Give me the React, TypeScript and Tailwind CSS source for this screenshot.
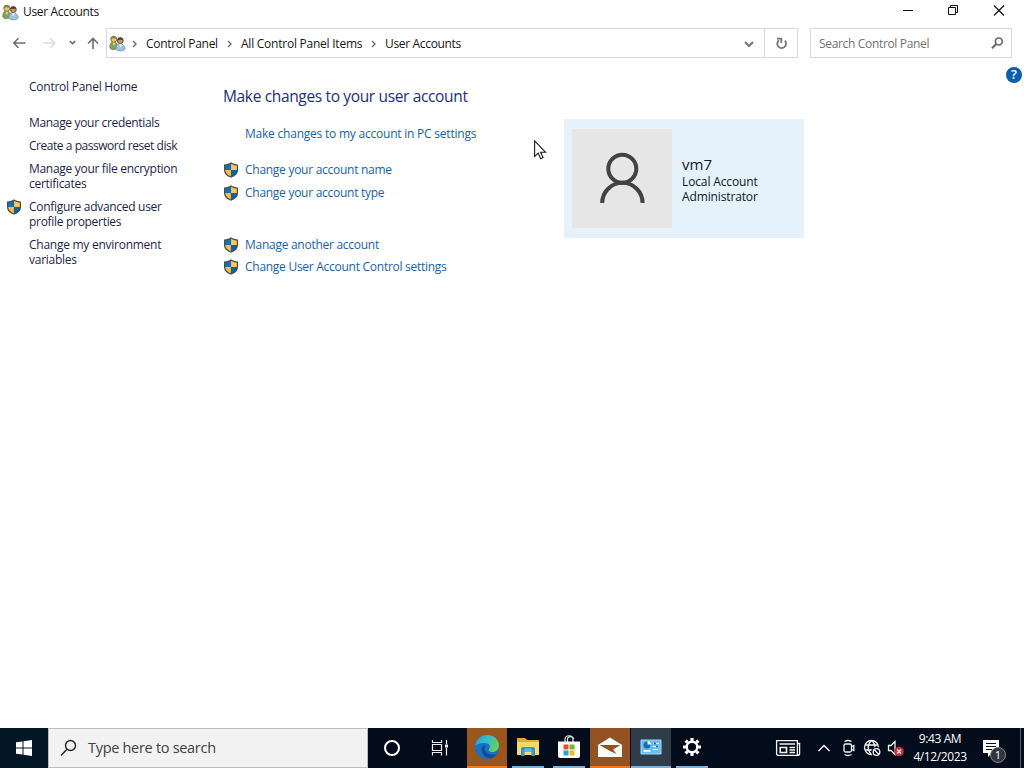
import type { ReactNode } from 'react';

function UsersIcon() {
  return (
    <svg width="17" height="17" viewBox="0 0 17 17" className="shrink-0">
      <path d="M.8 12.500c0-4 1.200-5.500 3.700-5.500s4 2 4 5l-2 2.500H2.200z" fill="#86a251" stroke="#5d7538" strokeWidth=".6" />
      <path d="M3.500 7.500l1.500 4 1-4z" fill="#dce8ae" />
      <circle cx="4.800" cy="4.300" r="3" fill="#dfc671" stroke="#7c672b" strokeWidth=".9" />
      <path d="M1.700 4.500c-.5-4.500 5.500-4.800 6-.7-2.200-1-4.500-.8-6 .7z" fill="#927837" />
      <path d="M6.800 14c0-3.500 1.700-5.200 4.200-5.200s5.200 2 5.200 5.200c-2 2.600-7.400 2.600-9.400 0z" fill="#9ec3dc" stroke="#638aa6" strokeWidth=".7" />
      <circle cx="11.300" cy="5.700" r="2.900" fill="#cb9564" stroke="#56412f" strokeWidth=".8" />
      <path d="M8.200 6c-.6-4.600 5.800-5 6.400-.6-2.200-.9-4.400-.9-6.400.6z" fill="#4d443b" />
      <path d="M9.800 9.200l1.700 3.300L13 9.200z" fill="#f4f6f5" />
    </svg>
  );
}

function Shield() {
  return (
    <svg width="16" height="16" viewBox="0 0 16 16" className="shrink-0">
      <path d="M8 .3c2 1.500 4 2 7 2.200V8c0 3.800-2.700 6.200-7 7.700C3.700 14.200 1 11.800 1 8V2.500C4 2.300 6 1.800 8 .3z" fill="#4b4c47" />
      <path d="M7.900 1.700C6.200 3 4.300 3.400 2.200 3.600V8h5.700z" fill="#1670b5" />
      <path d="M8.100 1.700C9.800 3 11.700 3.400 13.800 3.600V8H8.100z" fill="#fac85a" />
      <path d="M2.200 8h5.700v6.400C4.400 13.100 2.300 11.100 2.200 8z" fill="#f5bd4b" />
      <path d="M13.800 8H8.100v6.400c3.500-1.300 5.600-3.300 5.700-6.400z" fill="#0d61a8" />
    </svg>
  );
}

function Crumb({ children }: { children: ReactNode }) {
  return (
    <>
      <svg width="6" height="8" viewBox="0 0 6 8" className="shrink-0">
        <path d="M1 1l3 3-3 3" fill="none" stroke="#6b6b6b" strokeWidth="1.400" />
      </svg>
      {children}
    </>
  );
}

function TitleBar() {
  return (
    <header className="flex h-7 items-start justify-between">
      <div className="flex h-6 items-center gap-1 pl-0.5">
        <UsersIcon />
        <span className="text-xs tracking-[-0.33px]">User Accounts</span>
      </div>
      <svg width="124" height="22" viewBox="0 0 124 22" fill="none" stroke="#111" strokeWidth="1">
        <path d="M3 10.500h10" />
        <path d="M48.500 7.500h7v7h-7zM50.500 7.500v-2h7v7h-2" />
        <path d="M94 5.500l10 10M104 5.500l-10 10" strokeWidth="1.200" />
      </svg>
    </header>
  );
}

function AddressRow() {
  return (
    <div className="flex h-[30px] items-stretch pr-3">
      <svg width="106" height="30" viewBox="0 0 106 30" fill="none" stroke="#6d6d6d" strokeWidth="1.600" className="shrink-0">
        <path d="M25.500 15H14M18.500 10.300L13.800 15l4.700 4.700" />
        <path d="M43 15h11.500M50 10.300l4.700 4.700-4.700 4.700" stroke="#dadada" />
        <path d="M69.800 13.200l2.700 2.500 2.700-2.500" />
        <path d="M93 21V10.500M88 15.500l5-5 5 5" />
      </svg>
      <div className="flex w-[692px] border border-[#d9d9d9]">
        <div className="flex flex-1 items-center pt-px pl-0.5 text-xs">
          <UsersIcon />
          <div className="flex items-center pl-1.5">
            <Crumb>
              <span className="w-[89px] pl-2 tracking-[-0.3px]">Control Panel</span>
            </Crumb>
          </div>
          <Crumb>
            <span className="w-[138px] pl-2 tracking-[-0.24px]">All Control Panel Items</span>
          </Crumb>
          <Crumb>
            <span className="pl-2 tracking-[-0.33px]">User Accounts</span>
          </Crumb>
          <svg width="12" height="8" viewBox="0 0 12 8" className="mr-[9px] ml-auto">
            <path d="M2 2l4 4 4-4" fill="none" stroke="#747474" strokeWidth="2" />
          </svg>
        </div>
        <div className="flex w-[33px] items-center justify-center border-l border-[#d9d9d9]">
          <svg width="14" height="14" viewBox="0 0 14 14" fill="none" stroke="#747474" strokeWidth="1.800">
            <path d="M10.800 4.600A4.400 4.400 0 1 1 5 4.200" />
            <path d="M3 2.700h4.300V7" />
          </svg>
        </div>
      </div>
      <div className="ml-3 flex w-[202px] items-center justify-between border border-[#d9d9d9] pr-[7px] pl-2">
        <span className="pt-px text-xs tracking-[-0.33px] text-[#727272]">Search Control Panel</span>
        <svg width="14" height="14" viewBox="0 0 14 14" fill="none" stroke="#696969">
          <circle cx="8.800" cy="5.400" r="3.400" strokeWidth="1.700" />
          <path d="M6.300 8L2 12.300" strokeWidth="2" />
        </svg>
      </div>
    </div>
  );
}

function Sidebar() {
  return (
    <nav className="flex w-[223px] flex-col gap-2 pt-[21px] pl-[29px] text-xs leading-[15px] tracking-[-0.3px] text-[#1e1f4b]">
      <a className="mb-[13px] tracking-[-0.25px]">Control Panel Home</a>
      <a className="tracking-[-0.33px]">Manage your credentials</a>
      <a className="tracking-[-0.46px]">Create a password reset disk</a>
      <a>
        Manage your file encryption
        <br />
        certificates
      </a>
      <div className="-ml-[23px] flex gap-[7px]">
        <Shield />
        <a>
          Configure advanced user
          <br />
          profile properties
        </a>
      </div>
      <a className="tracking-[-0.26px]">
        Change my environment
        <br />
        variables
      </a>
    </nav>
  );
}

function TaskLink({ children }: { children: ReactNode }) {
  return (
    <div className="flex h-4 items-center gap-1.5">
      <Shield />
      <a>{children}</a>
    </div>
  );
}

function Tasks() {
  return (
    <section className="w-[341px] pt-7 text-xs leading-4 tracking-[-0.27px] text-[#1763ac]">
      <h1 className="text-[15.5px] leading-5 tracking-[-0.35px] text-[#1c2f80]">Make changes to your user account</h1>
      <a className="mt-5 block pl-[22px] tracking-[-0.22px]">Make changes to my account in PC settings</a>
      <div className="mt-5 flex flex-col gap-[7px]">
        <TaskLink>Change your account name</TaskLink>
        <TaskLink>Change your account type</TaskLink>
      </div>
      <div className="mt-9 flex flex-col gap-[6px]">
        <TaskLink>Manage another account</TaskLink>
        <TaskLink>Change User Account Control settings</TaskLink>
      </div>
    </section>
  );
}

function AccountCard() {
  return (
    <section className="mt-[61px] flex h-[119px] w-[240px] bg-[#e5f2fb] pt-2.5 pl-2">
      <div className="h-[99px] w-[100px] bg-[#e6e6e6]">
        <svg width="100" height="99" viewBox="0 0 100 99" fill="none" stroke="#424242" strokeWidth="4">
          <circle cx="50.300" cy="39.700" r="14" />
          <path d="M30.200 74a20.200 20.200 0 0 1 40.400 0" />
        </svg>
      </div>
      <div className="pt-[25px] pl-2.5 text-xs leading-[15px] tracking-[-0.13px] text-[#10182a]">
        <div className="text-[15px] leading-5 tracking-normal">vm7</div>
        <div>Local Account</div>
        <div>Administrator</div>
      </div>
    </section>
  );
}

function Pointer() {
  return (
    <svg width="13" height="20" viewBox="0 0 13 20" className="absolute top-[140px] left-[534px]">
      <path d="M.6.900v15.500l3.600-3.300 2.500 5.600 2.400-1.100-2.500-5.400h4.900z" fill="#fff" stroke="#171724" strokeWidth="1.100" />
    </svg>
  );
}

function EdgeIcon() {
  return (
    <svg width="26" height="26" viewBox="0 0 26 26">
      <defs>
        <linearGradient id="edgeTop" x1="0" y1="0" x2="1" y2=".5">
          <stop offset="0" stopColor="#2296d3" />
          <stop offset=".5" stopColor="#34bfc9" />
          <stop offset="1" stopColor="#65cf63" />
        </linearGradient>
      </defs>
      <circle cx="13" cy="13" r="12" fill="#1473c4" />
      <path d="M1.200 12C2 5 7 1 13 1c7 0 12 4.800 12 10.500 0 4-3 6.500-6.500 6.500-3 0-4.500-1.300-3.500-2.700 2.500-3.500-.5-6.300-4-6.300-4.500 0-8.500 1-9.800 3z" fill="url(#edgeTop)" />
      <path d="M9.500 11.500C5 16 9 23.500 16 24.500c3-.8 5.500-2.500 7-5-5 3-12.500 0-12.500-5.500 0-1 .3-1.800 1-2.500z" fill="#124d94" />
    </svg>
  );
}

function FolderIcon() {
  return (
    <svg width="24" height="22" viewBox="0 0 24 22">
      <path d="M1 3.500V2h8l2 2h12v15H1z" fill="#e6aa2c" />
      <path d="M1 6h22v13H1z" fill="#fbd66f" />
      <path d="M5 20v-7.500q0-1.500 1.500-1.500h11q1.500 0 1.500 1.500V20h-3.500v-4h-7v4z" fill="#3b91cf" />
      <path d="M8.500 12.500h7V16h-7z" fill="#61b5e8" />
    </svg>
  );
}

function StoreIcon() {
  return (
    <svg width="24" height="26" viewBox="0 0 24 26">
      <path d="M8 8V5.500c0-5 8-5 8 0V8M10.500 8V5c0-3 6-3 6 0" fill="none" stroke="#e6e6e6" strokeWidth="1.200" />
      <path d="M1 7.500h22V22q0 2-2 2H3q-2 0-2-2z" fill="#fff" />
      <path d="M6.500 10.500h5v5h-5z" fill="#e6502b" />
      <path d="M12.500 10.500h5v5h-5z" fill="#7eb32d" />
      <path d="M6.500 16.500h5v5h-5z" fill="#2b9fdc" />
      <path d="M12.500 16.500h5v5h-5z" fill="#f5b71f" />
    </svg>
  );
}

function MailIcon() {
  return (
    <svg width="26" height="22" viewBox="0 0 26 22">
      <path d="M1 9L13 1.500 25 9v12H1z" fill="#fff" />
      <path d="M2.500 9h21L16 13.500l3.500 4.500-6.500-3z" fill="#945121" />
    </svg>
  );
}

function ControlPanelIcon() {
  return (
    <svg width="22" height="18" viewBox="0 0 22 18">
      <path d="M1 2h20v14H1z" fill="#69bdf0" stroke="#a3daf6" />
      <circle cx="7" cy="7" r="3.500" fill="#1c6cab" />
      <path d="M7.500 6.500V3A3.500 3.500 0 0 1 11 6.500z" fill="#eef8fd" />
      <path d="M13 5.500h6M13 8.500h6M13 11.500h6" stroke="#e7f6fe" />
      <path d="M14 5.500h2M16 8.500h2" stroke="#176dad" strokeWidth="1.500" />
      <path d="M3.500 13h7" stroke="#e7f6fe" strokeWidth="2" />
    </svg>
  );
}

function GearIcon() {
  return (
    <svg width="20" height="20" viewBox="-10 -10 20 20" stroke="#fff" fill="none">
      <circle r="5.300" strokeWidth="2.400" />
      <g strokeWidth="3.200">
        <path d="M0-9v3M0 9V6M-9 0h3M9 0H6" />
        <path d="M-6.400-6.400l2.100 2.100M6.400 6.400L4.300 4.300M-6.400 6.400l2.100-2.100M6.400-6.400L4.300-4.300" />
      </g>
    </svg>
  );
}

function Tray() {
  return (
    <div className="ml-auto flex h-10 items-center text-white">
      <svg width="137" height="40" viewBox="0 0 137 40" fill="none" stroke="#f2f4f6" strokeWidth="1.300">
        {/* news */}
        <path d="M4.600 12.600h20.800v14.800H6.600q-2 0-2-2zM25.400 15.500h2.200v9.900q0 2-2 2" />
        <path d="M7.500 16h15.500M17.500 19.500h5.500M17.500 22h5.500M17.500 24.500h5.500" />
        <path d="M8.200 19.500h6.300v5H8.200z" strokeWidth="1.600" />
        {/* hidden icons */}
        <path d="M46.500 23l5.500-5.500 5.500 5.500" strokeWidth="1.500" />
        {/* meet now */}
        <rect x="72" y="16" width="7.500" height="8" rx="1.500" />
        <path d="M79.500 18.700l2.300-1.200v5l-2.300-1.200M72.500 13.500q3.500-2 7 0M72.500 26.500q3.500 2 7 0" />
        {/* network */}
        <circle cx="99.500" cy="19.500" r="7" />
        <path d="M99.500 12.500c-4.500 4-4.500 10 0 14M99.500 12.500c3 2.500 3.700 5 3.500 7.500M93 17h13M93 22h7" />
        <circle cx="104.500" cy="24" r="5.200" fill="#020c1a" stroke="none" />
        <circle cx="104.500" cy="24" r="3.300" />
        <path d="M102.300 21.800l4.400 4.400" />
        {/* volume */}
        <path d="M116.500 17.500h2.500l4-4v13l-4-4h-2.500z" />
        <circle cx="127" cy="23.500" r="4.800" fill="#c72c37" stroke="none" />
        <path d="M125 21.500l4 4M129 21.500l-4 4" />
      </svg>
      <div className="w-[62px] text-center text-xs leading-[18px] tracking-[-0.4px]">
        <div>9:43 AM</div>
        <div>4/12/2023</div>
      </div>
      <div className="relative ml-[11px] h-10 w-[39px] border-r border-[#53606c]">
        <svg width="28" height="28" viewBox="0 0 28 28" className="mt-2">
          <path d="M1 4h16v13h-7l-4 4v-4H1z" fill="#fff" />
          <path d="M4 7.500h10M4 10.500h10M4 13.500h6" stroke="#020c1a" strokeWidth="1.200" />
        </svg>
        <span className="absolute top-[19px] left-2 flex size-4 items-center justify-center rounded-full border border-[#81878c] bg-[#30363b] text-[11px]">1</span>
      </div>
      <div className="w-[3px]" />
    </div>
  );
}

function Taskbar() {
  return (
    <footer className="flex h-10 bg-[#020c1a]">
      <div className="flex w-12 items-center justify-center bg-[#021522]">
        <svg width="16" height="16" viewBox="0 0 16 16" fill="#fff">
          <path d="M0 2.300l6.500-.9v6.100H0zM7.500 1.200L16 0v7.500H7.500zM0 8.500h6.500v6.100L0 13.700zM7.500 8.500H16V16l-8.500-1.200z" />
        </svg>
      </div>
      <div className="flex w-[320px] items-center gap-[11px] border border-[#b8bdc0] bg-[#f2f2f2] pl-[11px]">
        <svg width="17" height="18" viewBox="0 0 17 18" fill="none" stroke="#222" strokeWidth="1.400">
          <circle cx="10.500" cy="6.500" r="5" />
          <path d="M7 10.200L1 16.500" />
        </svg>
        <span className="text-[14.5px] tracking-[-0.3px] text-[#404040]">Type here to search</span>
      </div>
      <div className="flex w-12 items-center justify-center">
        <div className="size-4 rounded-full border-2 border-white" />
      </div>
      <div className="flex w-[51px] items-center pl-[15px]">
        <svg width="18" height="18" viewBox="0 0 18 18" fill="none" stroke="#eee" strokeWidth="1.200">
          <path d="M1.500 5.500h9v6h-9zM1.500 1v2.500h9V1M1.500 16.500v-3h9v3M15.500 1v4M15.500 9v7.500" />
          <path d="M14 7h3" strokeWidth="3" />
        </svg>
      </div>
      <div className="flex w-10 items-center justify-center border-b-2 border-[#f57617] bg-[#99561f]">
        <EdgeIcon />
      </div>
      <div className="ml-[5px] flex w-8 items-center justify-center border-b-2 border-[#78b5e4]">
        <FolderIcon />
      </div>
      <div className="ml-[9px] flex w-8 items-center justify-center border-b-2 border-[#78b5e4]">
        <StoreIcon />
      </div>
      <div className="ml-[5px] flex w-10 items-center justify-center border-b-2 border-[#f57617] bg-[#945121]">
        <MailIcon />
      </div>
      <div className="ml-px flex w-10 items-center justify-center border-b-2 border-[#78b5e4] bg-[#303d49]">
        <ControlPanelIcon />
      </div>
      <div className="ml-[5px] flex w-8 items-center justify-center border-b-2 border-[#78b5e4]">
        <GearIcon />
      </div>
      <Tray />
    </footer>
  );
}

export default function App() {
  return (
    <div className="relative flex h-screen w-full flex-col overflow-hidden bg-white font-['Open_Sans','Noto_Sans',sans-serif] whitespace-nowrap text-[#161616]">
      <TitleBar />
      <AddressRow />
      <main className="flex flex-1">
        <Sidebar />
        <Tasks />
        <AccountCard />
        <div className="mt-[9px] mr-[2px] ml-auto flex size-4 items-center justify-center rounded-full bg-[#0c5eac] text-[13px] font-semibold text-white">?</div>
      </main>
      <Taskbar />
      <Pointer />
    </div>
  );
}
